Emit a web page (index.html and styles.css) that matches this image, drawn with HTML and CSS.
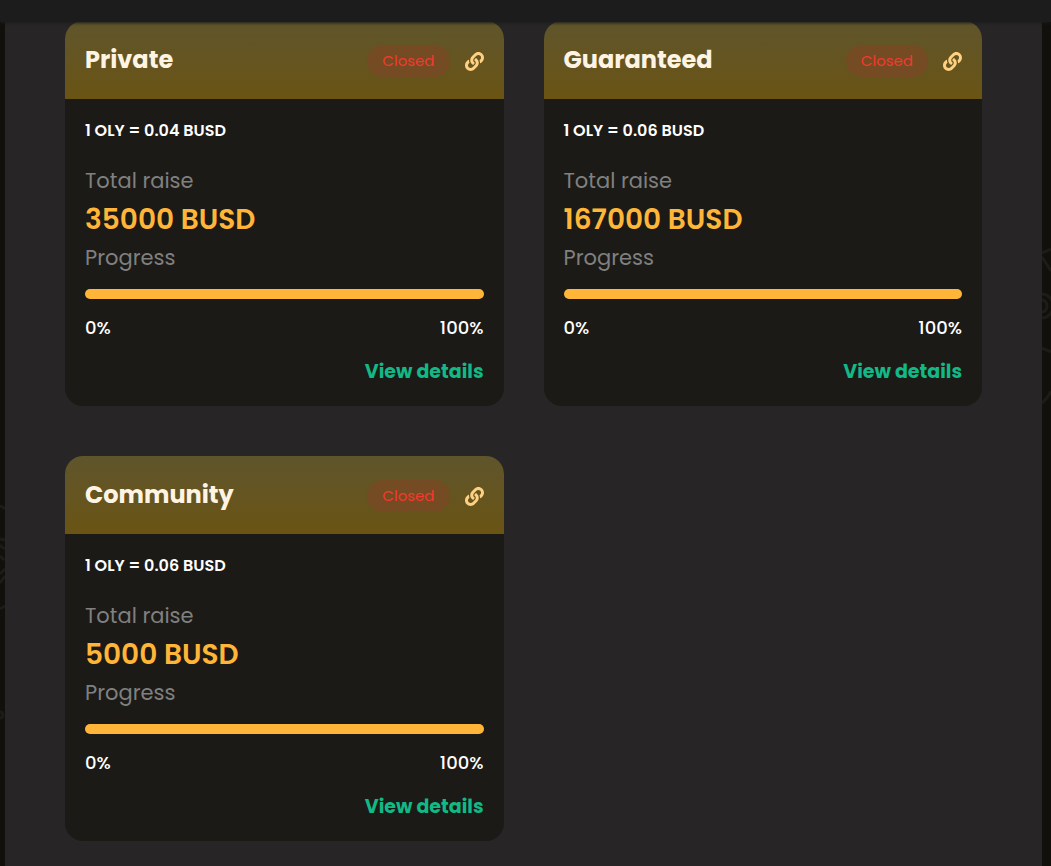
FILE: index.html
```html
<!DOCTYPE html>
<html lang="en">
<head>
<meta charset="utf-8">
<meta name="viewport" content="width=device-width, initial-scale=1">
<title>Pools</title>
<link rel="stylesheet" href="styles.css">
</head>
<body>
<svg class="symbols" aria-hidden="true">
  <symbol id="link" viewBox="0 0 512 512"><path d="M326.612 185.391c59.747 59.809 58.927 155.698.36 214.59-.11.12-.24.25-.36.37l-67.2 67.2c-59.27 59.27-155.699 59.262-214.96 0-59.27-59.26-59.27-155.7 0-214.96l37.106-37.106c9.84-9.84 26.786-3.3 27.294 10.606.648 17.722 3.826 35.527 9.69 52.721 1.986 5.822.567 12.262-3.783 16.612l-13.087 13.087c-28.026 28.026-28.905 73.66-1.155 101.96 28.024 28.579 74.086 28.749 102.325.51l67.2-67.19c28.191-28.191 28.073-73.757 0-101.83-3.701-3.694-7.429-6.564-10.341-8.569a16.037 16.037 0 0 1-6.947-12.606c-.396-10.567 3.348-21.456 11.698-29.806l21.054-21.055c5.521-5.521 14.182-6.199 20.584-1.731a152.482 152.482 0 0 1 20.522 17.197zM467.547 44.449c-59.261-59.262-155.69-59.27-214.96 0l-67.2 67.2c-.12.12-.25.25-.36.37-58.566 58.892-59.387 154.781.36 214.59a152.454 152.454 0 0 0 20.521 17.196c6.402 4.468 15.064 3.789 20.584-1.731l21.054-21.055c8.35-8.35 12.094-19.239 11.698-29.806a16.037 16.037 0 0 0-6.947-12.606c-2.912-2.005-6.64-4.875-10.341-8.569-28.073-28.073-28.191-73.639 0-101.83l67.2-67.19c28.239-28.239 74.3-28.069 102.325.51 27.75 28.3 26.872 73.934-1.155 101.96l-13.087 13.087c-4.35 4.35-5.769 10.79-3.783 16.612 5.864 17.194 9.042 34.999 9.69 52.721.509 13.906 17.454 20.446 27.294 10.606l37.106-37.106c59.271-59.259 59.271-155.699.001-214.959z"/></symbol>
</svg>
<header class="topbar"></header>
<div class="page">
  <svg class="doodle doodle-left" width="5" height="844" aria-hidden="true"><path d="M0 485q3 1 5 3M0 518l5 1M0 524q3 4 5 3M0 535l4 4M0 553l5-5M0 562l5-7M0 588l5-3"/><circle cx="0" cy="694" r="3"/></svg>
  <svg class="doodle doodle-right" width="9" height="844" aria-hidden="true"><path d="M0 232l9-4M0 236l9 14M0 273a11 12 0 0 1 0 24M0 279a5 6 0 0 1 0 12M0 327l9 4M0 382q6-5 9-12"/></svg>
  <main class="panel">
    <article class="card">
      <header class="card-head">
        <h2 class="card-title">Private</h2>
        <span class="status">Closed</span>
        <a class="site-link" href="#" aria-label="Private pool link"><svg class="icon" aria-hidden="true"><use href="#link"/></svg></a>
      </header>
      <div class="card-body">
        <p class="rate">1 OLY = 0.04 BUSD</p>
        <p class="label">Total raise</p>
        <p class="amount">35000 BUSD</p>
        <label class="label" for="p1">Progress</label>
        <progress class="bar" id="p1" value="100" max="100"></progress>
        <div class="scale"><span>0%</span><span>100%</span></div>
        <a class="details" href="#">View details</a>
      </div>
    </article>
    <article class="card">
      <header class="card-head">
        <h2 class="card-title">Guaranteed</h2>
        <span class="status">Closed</span>
        <a class="site-link" href="#" aria-label="Guaranteed pool link"><svg class="icon" aria-hidden="true"><use href="#link"/></svg></a>
      </header>
      <div class="card-body">
        <p class="rate">1 OLY = 0.06 BUSD</p>
        <p class="label">Total raise</p>
        <p class="amount">167000 BUSD</p>
        <label class="label" for="p2">Progress</label>
        <progress class="bar" id="p2" value="100" max="100"></progress>
        <div class="scale"><span>0%</span><span>100%</span></div>
        <a class="details" href="#">View details</a>
      </div>
    </article>
    <article class="card">
      <header class="card-head">
        <h2 class="card-title">Community</h2>
        <span class="status">Closed</span>
        <a class="site-link" href="#" aria-label="Community pool link"><svg class="icon" aria-hidden="true"><use href="#link"/></svg></a>
      </header>
      <div class="card-body">
        <p class="rate">1 OLY = 0.06 BUSD</p>
        <p class="label">Total raise</p>
        <p class="amount">5000 BUSD</p>
        <label class="label" for="p3">Progress</label>
        <progress class="bar" id="p3" value="100" max="100"></progress>
        <div class="scale"><span>0%</span><span>100%</span></div>
        <a class="details" href="#">View details</a>
      </div>
    </article>
  </main>
</div>
</body>
</html>
```
FILE: styles.css
```css
* { box-sizing: border-box; }
body {
  margin: 0;
  min-height: 100vh;
  display: flex;
  flex-direction: column;
  background: #11100d;
  color: #fff;
  font-family: Poppins, Inter, sans-serif;
}
h2, p { margin: 0; }
a { text-decoration: none; }
.symbols { position: absolute; width: 0; height: 0; }
.topbar {
  position: relative;
  z-index: 1;
  height: 22px;
  margin-bottom: -1px;
  background: #1c1c1c;
  box-shadow: 0 1px 3px #1c1c1c;
}
.page {
  position: relative;
  flex: 1;
  display: flex;
  padding: 0 9px 0 5px;
}
.doodle {
  position: absolute;
  top: 0;
  fill: none;
  stroke: #1d1c18;
  stroke-width: 3;
}
.doodle-left { left: 0; }
.doodle-right { right: 0; }
.panel {
  flex: 1;
  display: grid;
  grid-template-columns: repeat(auto-fill, minmax(360px, 1fr));
  align-content: start;
  gap: 50px 40px;
  padding: 0 60px 25px;
  background: #272526;
}
.card {
  overflow: hidden;
  border-radius: 18px;
  background: #1b1a16;
}
.card-head {
  display: flex;
  align-items: center;
  height: 78px;
  padding: 2px 20px 0;
  background: linear-gradient(#5f552c, #6a5414);
}
.card-title {
  flex: 1;
  padding-bottom: 2px;
  color: #fff4e3;
  font-size: 24px;
  line-height: 36px;
  font-weight: 700;
}
.status {
  padding: 4px 15px;
  border-radius: 16px;
  background: #744b22;
  color: #f3392f;
  font-size: 15px;
  line-height: 24px;
}
.site-link {
  display: flex;
  margin-left: 15px;
  color: #ffd082;
}
.icon { width: 19px; height: 19px; fill: currentColor; }
.card-body {
  display: flex;
  flex-direction: column;
  padding: 20px 20px 19px;
}
.rate {
  margin-bottom: 20px;
  font-size: 16px;
  line-height: 24px;
  font-weight: 600;
}
.label {
  color: #808080;
  font-size: 21px;
  line-height: 36px;
}
.amount {
  color: #ffb638;
  font-size: 28px;
  line-height: 41px;
  font-weight: 600;
}
.bar {
  appearance: none;
  display: block;
  width: 100%;
  height: 10px;
  margin: 13px 0 17px;
  border: 0;
  border-radius: 5px;
  overflow: hidden;
  background: #333;
}
.bar::-webkit-progress-bar { background: #333; }
.bar::-webkit-progress-value { background: #ffb638; }
.bar::-moz-progress-bar { background: #ffb638; }
.scale {
  display: flex;
  justify-content: space-between;
  font-size: 18px;
  line-height: 24px;
  font-weight: 500;
}
.details {
  align-self: flex-end;
  margin-top: 17px;
  color: #12b886;
  font-size: 19px;
  line-height: 30px;
  font-weight: 700;
}
```
